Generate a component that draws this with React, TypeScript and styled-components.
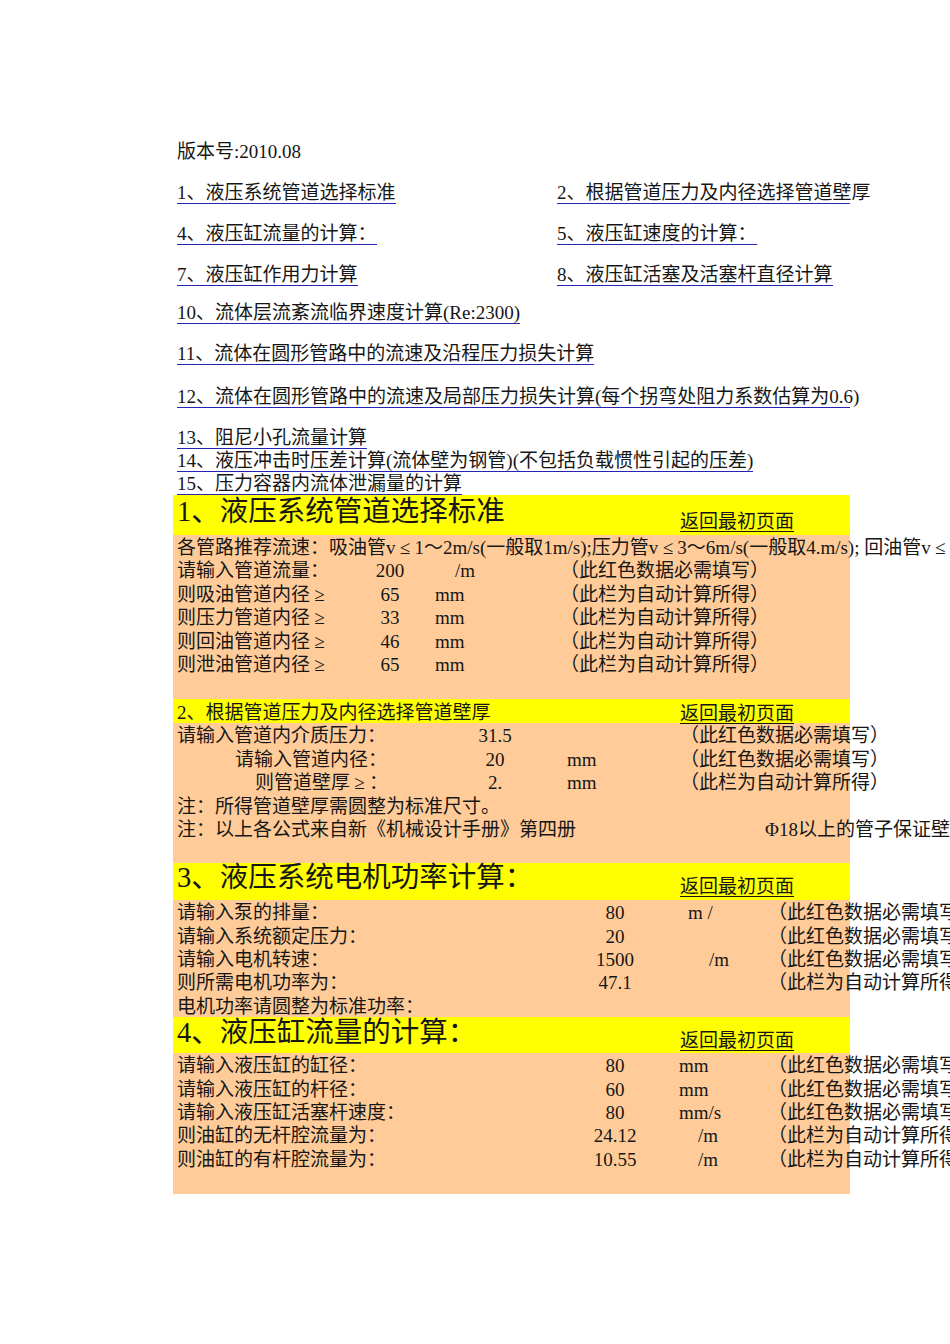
import React from "react";
import styled, { createGlobalStyle } from "styled-components";

const GlobalStyle = createGlobalStyle`
  html, body {
    margin: 0;
    padding: 0;
    overflow: hidden;
    background: #ffffff;
  }
  body {
    font-family: "Liberation Serif", "Noto Sans CJK SC", serif;
    color: #161616;
  }
`;

const Page = styled.div`
  padding: 139px 0 0 173px;
  font-size: 19px;
  white-space: nowrap;
`;

const Toc = styled.div`
  display: flex;
  flex-direction: column;
  padding-left: 4px;
`;

const Version = styled.div`
  line-height: 23px;
  height: 23px;
  padding-top: 1px;
`;

const TocRow = styled.div<{ $gap: number }>`
  display: grid;
  grid-template-columns: 380px auto;
  line-height: 23px;
  height: 23px;
  margin-top: ${(p) => p.$gap}px;
`;

const TocLink = styled.a<{ $lineMax?: number }>`
  position: relative;
  display: inline-block;
  justify-self: start;
  color: #161616;
  text-decoration: none;
  cursor: pointer;
  &::after {
    content: "";
    position: absolute;
    left: 0;
    bottom: 0;
    height: 1.5px;
    width: 100%;
    max-width: ${(p) => (p.$lineMax ? `${p.$lineMax}px` : "none")};
    background: #2424b4;
  }
`;

/* full-width symbol, as in the original CJK sheet font */
const Wide = styled.span`
  display: inline-block;
  width: 1em;
  text-align: center;
`;

const Sheet = styled.div`
  width: 677px;
  background: #ffcc99;
`;

const Head = styled.div<{ $h: number }>`
  display: grid;
  grid-template-columns: 503px auto;
  height: ${(p) => p.$h}px;
  padding-left: 4px;
  background: #ffff00;
`;

const Title = styled.div<{ $top: number }>`
  align-self: start;
  font-size: 28.5px;
  line-height: 28px;
  padding-top: ${(p) => p.$top}px;
`;

const SubTitle = styled.div`
  align-self: center;
  line-height: 24px;
  padding-top: 2px;
`;

const BackLink = styled.a<{ $bottom: number }>`
  align-self: end;
  justify-self: start;
  line-height: 23px;
  margin-bottom: ${(p) => p.$bottom}px;
  color: #161616;
  text-decoration: underline;
  text-decoration-thickness: 1px;
  text-underline-offset: 3px;
  cursor: pointer;
`;

const Row = styled.div<{ $cols: string }>`
  display: grid;
  grid-template-columns: ${(p) => p.$cols};
  box-sizing: border-box;
  height: 23.4px;
  padding: 1px 0 0 4px;
  line-height: 23.4px;
`;

const Cell = styled.div<{ $align?: string; $pad?: number }>`
  height: 22.4px;
  text-align: ${(p) => p.$align || "left"};
  padding-left: ${(p) => p.$pad || 0}px;
  overflow: visible;
`;

const Spacer = styled.div<{ $h: number }>`
  height: ${(p) => p.$h}px;
`;

const rich = (text?: string) => {
  if (!text) return null;
  return text.split(/([≤≥])/).map((part, i) =>
    part === "≤" || part === "≥" ? <Wide key={i}>{part}</Wide> : <React.Fragment key={i}>{part}</React.Fragment>
  );
};

type DataRow = {
  label: string;
  labelPad?: number;
  value?: string;
  unit?: string;
  unitPad?: number;
  note?: string;
};

const COLS1 = "183px 60px 140px auto";
const COLS2 = "278px 80px 145px auto";
const COLS34 = "403px 70px 118px auto";

const RED = "（此红色数据必需填写）";
const AUTO = "（此栏为自动计算所得）";

const sec1: DataRow[] = [
  { label: "请输入管道流量：", value: "200", unit: "/m", unitPad: 35, note: RED },
  { label: "则吸油管道内径≥", value: "65", unit: "mm", unitPad: 15, note: AUTO },
  { label: "则压力管道内径≥", value: "33", unit: "mm", unitPad: 15, note: AUTO },
  { label: "则回油管道内径≥", value: "46", unit: "mm", unitPad: 15, note: AUTO },
  { label: "则泄油管道内径≥", value: "65", unit: "mm", unitPad: 15, note: AUTO },
];

const sec2: DataRow[] = [
  { label: "请输入管道内介质压力：", value: "31.5", note: RED },
  { label: "请输入管道内径：", labelPad: 58, value: "20", unit: "mm", unitPad: 32, note: RED },
  { label: "则管道壁厚≥：", labelPad: 78, value: "2.", unit: "mm", unitPad: 32, note: AUTO },
];

const sec3: DataRow[] = [
  { label: "请输入泵的排量：", value: "80", unit: "m /", unitPad: 38, note: RED },
  { label: "请输入系统额定压力：", value: "20", note: RED },
  { label: "请输入电机转速：", value: "1500", unit: "/m", unitPad: 59, note: RED },
  { label: "则所需电机功率为：", value: "47.1", note: AUTO },
  { label: "电机功率请圆整为标准功率：" },
];

const sec4: DataRow[] = [
  { label: "请输入液压缸的缸径：", value: "80", unit: "mm", unitPad: 29, note: RED },
  { label: "请输入液压缸的杆径：", value: "60", unit: "mm", unitPad: 29, note: RED },
  { label: "请输入液压缸活塞杆速度：", value: "80", unit: "mm/s", unitPad: 29, note: RED },
  { label: "则油缸的无杆腔流量为：", value: "24.12", unit: "/m", unitPad: 48, note: AUTO },
  { label: "则油缸的有杆腔流量为：", value: "10.55", unit: "/m", unitPad: 48, note: AUTO },
];

const Rows = ({ rows, cols }: { rows: DataRow[]; cols: string }) => (
  <>
    {rows.map((r, i) => (
      <Row key={i} $cols={cols}>
        <Cell $pad={r.labelPad}>{rich(r.label)}</Cell>
        <Cell $align="center">{r.value}</Cell>
        <Cell $pad={r.unitPad}>{r.unit}</Cell>
        <Cell>{r.note}</Cell>
      </Row>
    ))}
  </>
);

const tocRows: { gap: number; items: { text: string; lineMax?: number }[] }[] = [
  { gap: 18, items: [{ text: "1、液压系统管道选择标准" }, { text: "2、根据管道压力及内径选择管道壁厚", lineMax: 293 }] },
  { gap: 18, items: [{ text: "4、液压缸流量的计算：" }, { text: "5、液压缸速度的计算：" }] },
  { gap: 18, items: [{ text: "7、液压缸作用力计算" }, { text: "8、液压缸活塞及活塞杆直径计算" }] },
  { gap: 15, items: [{ text: "10、流体层流紊流临界速度计算(Re:2300)" }] },
  { gap: 18, items: [{ text: "11、流体在圆形管路中的流速及沿程压力损失计算" }] },
  { gap: 20, items: [{ text: "12、流体在圆形管路中的流速及局部压力损失计算(每个拐弯处阻力系数估算为0.6)", lineMax: 673 }] },
  { gap: 18, items: [{ text: "13、阻尼小孔流量计算" }] },
  { gap: 0, items: [{ text: "14、液压冲击时压差计算(流体壁为钢管)(不包括负载惯性引起的压差)" }] },
  { gap: 0, items: [{ text: "15、压力容器内流体泄漏量的计算" }] },
];

export default function App() {
  return (
    <>
      <GlobalStyle />
      <Page>
        <Toc>
          <Version>版本号:2010.08</Version>
          {tocRows.map((row, i) => (
            <TocRow key={i} $gap={row.gap}>
              {row.items.map((it, j) => (
                <TocLink key={j} $lineMax={it.lineMax}>
                  {it.text}
                </TocLink>
              ))}
            </TocRow>
          ))}
        </Toc>

        <Sheet>
          <Head $h={40}>
            <Title $top={3}>1、液压系统管道选择标准</Title>
            <BackLink $bottom={2}>返回最初页面</BackLink>
          </Head>
          <Row $cols="auto">
            <Cell>
              {rich("各管路推荐流速：吸油管v≤1～2m/s(一般取1m/s);压力管v≤3～6m/s(一般取4.m/s); 回油管v≤1.5～3m/s(一般取2m/s)")}
            </Cell>
          </Row>
          <Rows rows={sec1} cols={COLS1} />
          <Spacer $h={24} />

          <Head $h={24}>
            <SubTitle>2、根据管道压力及内径选择管道壁厚</SubTitle>
            <BackLink $bottom={0}>返回最初页面</BackLink>
          </Head>
          <Rows rows={sec2} cols={COLS2} />
          <Row $cols="auto">
            <Cell>注：所得管道壁厚需圆整为标准尺寸。</Cell>
          </Row>
          <Row $cols="588px auto">
            <Cell>注：以上各公式来自新《机械设计手册》第四册</Cell>
            <Cell>Φ18以上的管子保证壁厚不小于2mm</Cell>
          </Row>
          <Spacer $h={23} />

          <Head $h={37}>
            <Title $top={1}>3、液压系统电机功率计算：</Title>
            <BackLink $bottom={2}>返回最初页面</BackLink>
          </Head>
          <Rows rows={sec3} cols={COLS34} />

          <Head $h={36}>
            <Title $top={2}>4、液压缸流量的计算：</Title>
            <BackLink $bottom={1}>返回最初页面</BackLink>
          </Head>
          <Rows rows={sec4} cols={COLS34} />
          <Spacer $h={24} />
        </Sheet>
      </Page>
    </>
  );
}
